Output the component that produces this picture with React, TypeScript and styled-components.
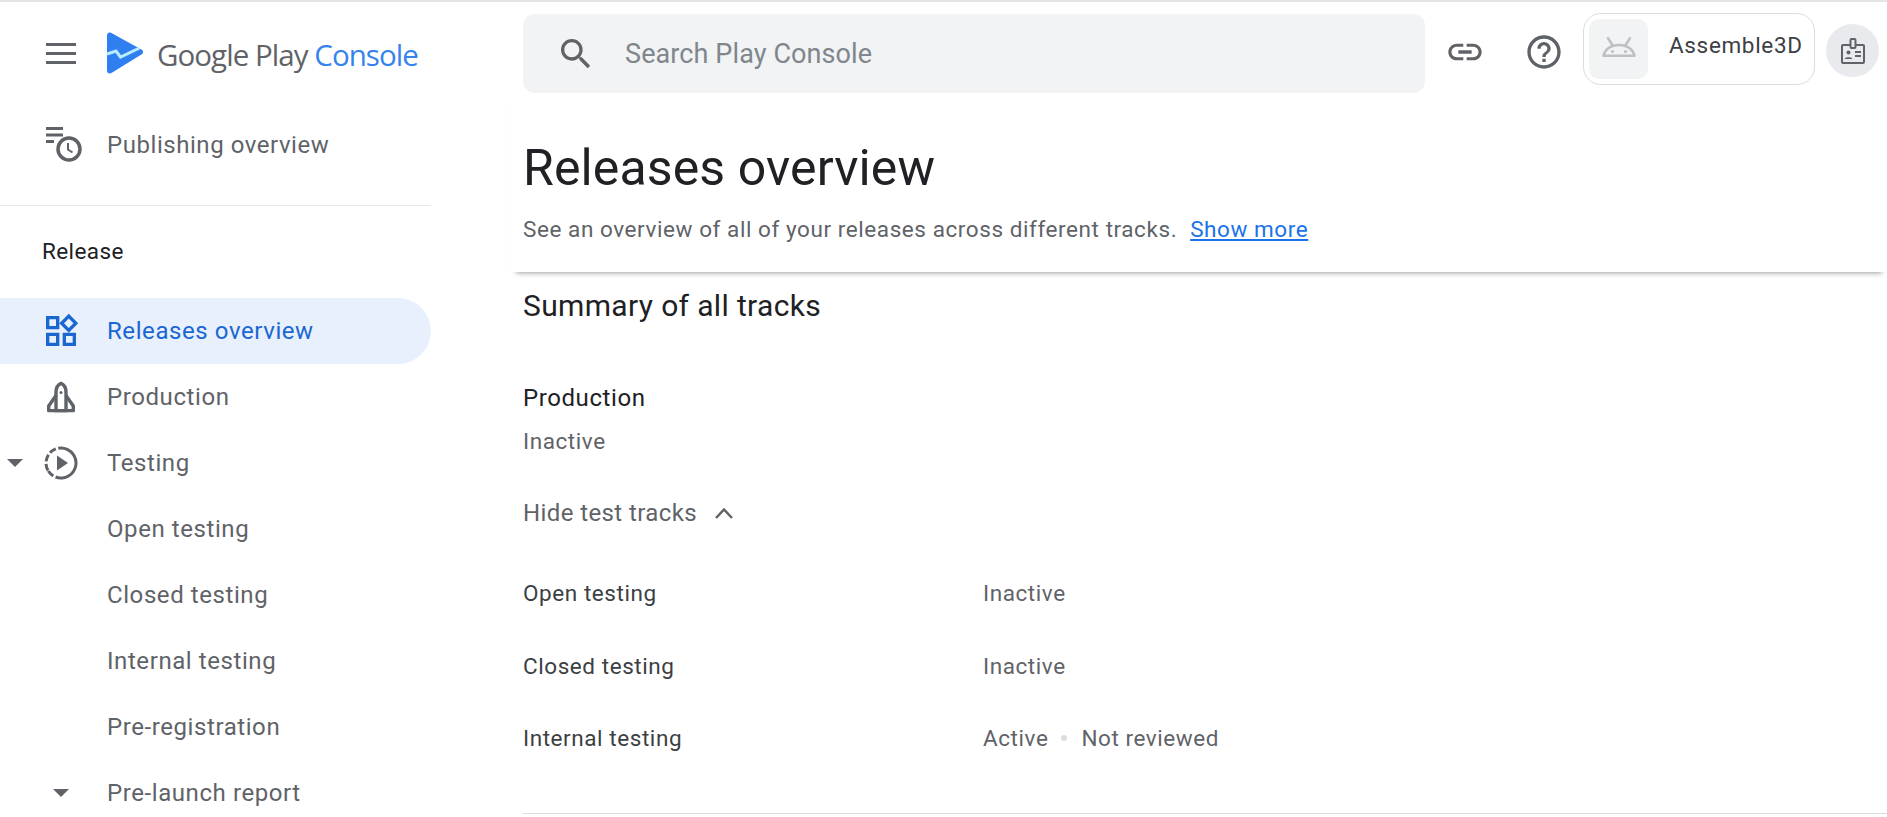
import React from "react";
import styled, { createGlobalStyle } from "styled-components";

const Global = createGlobalStyle`
  html, body { margin: 0; padding: 0; background: #fff; height: 100%; overflow: hidden; }
  body { font-family: Roboto, "Liberation Sans", sans-serif; color: #5f6368; }
  #root { height: 100%; }
`;

const Page = styled.div`
  display: grid;
  grid-template-columns: 431px 1fr;
  width: 1887px;
  height: 817px;
  overflow: hidden;
  border-top: 2px solid #e4e5e7;
  box-sizing: border-box;
`;

const Sidebar = styled.aside`
  display: flex;
  flex-direction: column;
  overflow: hidden;
`;

const Brand = styled.div`
  display: flex;
  align-items: center;
  height: 102px;
  padding-left: 46px;
  flex: none;
`;

const LogoMark = styled.svg`
  margin-left: 30px;
  flex: none;
`;

const LogoText = styled.span`
  margin: 4px 0 0 13px;
  font-family: "Open Sans", Roboto, sans-serif;
  font-size: 29.5px;
  letter-spacing: -0.95px;
  color: #5f6368;
  white-space: nowrap;
  line-height: 32px;
`;

const LogoAccent = styled.span`
  color: #3483ee;
`;

const PublishRow = styled.div`
  display: flex;
  align-items: center;
  height: 66px;
  padding-left: 46px;
  flex: none;
  margin-top: 8px;
`;

const NavDivider = styled.div`
  height: 1px;
  background: #e6e7e9;
  margin-top: 27px;
  flex: none;
`;

const SectionLabel = styled.div`
  font-size: 22.5px;
  line-height: 28px;
  letter-spacing: 0.4px;
  color: #202124;
  padding-left: 42px;
  margin: 31px 0 33px;
  flex: none;
`;

const NavItem = styled.div<{ $active?: boolean }>`
  position: relative;
  display: flex;
  align-items: center;
  height: 66px;
  flex: none;
  padding-left: 107px;
  padding-bottom: 1px;
  box-sizing: border-box;
  font-size: 24px;
  letter-spacing: 0.58px;
  white-space: nowrap;
  color: ${(p) => (p.$active ? "#1a67d2" : "#5f6368")};
  background: ${(p) => (p.$active ? "#e8f0fd" : "transparent")};
  border-radius: 0 33px 33px 0;
`;

const NavIconSlot = styled.span<{ $x: number }>`
  position: absolute;
  left: ${(p) => p.$x}px;
  top: 50%;
  transform: translateY(-50%);
  display: flex;
`;

const PublishLabel = styled.span`
  margin-left: 25px;
  font-size: 24px;
  letter-spacing: 0.55px;
  white-space: nowrap;
`;

const Main = styled.main`
  display: flex;
  flex-direction: column;
  min-width: 0;
  overflow: hidden;
`;

const TopBar = styled.div`
  display: flex;
  align-items: flex-start;
  padding: 12px 0 0 92px;
  flex: none;
`;

const SearchBox = styled.div`
  display: flex;
  align-items: center;
  width: 902px;
  height: 79px;
  background: #f1f3f4;
  border-radius: 12px;
  padding-left: 33px;
  box-sizing: border-box;
  flex: none;
  font-size: 27px;
  letter-spacing: 0.1px;
  color: #80868b;
`;

const SearchText = styled.span`
  margin-left: 29px;
`;

const IconButton = styled.div<{ $left: number }>`
  display: flex;
  margin: 18px 0 0 ${(p) => p.$left}px;
  flex: none;
`;

const AppChip = styled.div`
  display: flex;
  align-items: center;
  width: 232px;
  height: 72px;
  margin: -1px 0 0 19px;
  padding: 5px;
  box-sizing: border-box;
  border: 1px solid #dadce0;
  border-radius: 18px;
  flex: none;
`;

const AppThumb = styled.div`
  display: flex;
  align-items: center;
  justify-content: center;
  width: 59px;
  height: 60px;
  padding-bottom: 4px;
  box-sizing: border-box;
  background: #f1f3f4;
  border-radius: 10px;
  flex: none;
`;

const AppName = styled.span`
  margin: -8px 0 0 21px;
  font-size: 22.5px;
  letter-spacing: 0.66px;
  color: #3c4043;
  white-space: nowrap;
`;

const Avatar = styled.div`
  display: flex;
  align-items: center;
  justify-content: center;
  width: 53px;
  height: 53px;
  border-radius: 50%;
  background: #e8eaed;
  margin: 10px 0 0 11px;
  flex: none;
`;

const PageHead = styled.header`
  margin-left: 80px;
  padding: 47px 0 0 12px;
  height: 179px;
  box-sizing: border-box;
  box-shadow: 0 6px 5px -5px rgba(60, 64, 67, 0.5);
  flex: none;
`;

const Title = styled.h1`
  margin: 0;
  font-size: 50px;
  line-height: 56px;
  font-weight: 400;
  letter-spacing: 0.12px;
  color: #202124;
`;

const Subtitle = styled.p`
  margin: 19px 0 0;
  font-size: 22.5px;
  line-height: 28px;
  letter-spacing: 0.57px;
  color: #5f6368;
`;

const MoreLink = styled.a`
  margin-left: 13px;
  color: #1a73e8;
  text-decoration: underline;
`;

const Content = styled.section`
  padding: 0 0 0 92px;
  flex: 1;
  display: flex;
  flex-direction: column;
`;

const SectionTitle = styled.h2`
  margin: 17px 0 0;
  font-size: 30px;
  line-height: 34px;
  font-weight: 400;
  letter-spacing: 0.35px;
  color: #202124;
`;

const TrackName = styled.div`
  margin-top: 61px;
  font-size: 24px;
  line-height: 28px;
  letter-spacing: 0.58px;
  color: #202124;
`;

const TrackStatus = styled.div`
  margin-top: 15px;
  font-size: 22.5px;
  line-height: 28px;
  letter-spacing: 0.57px;
  color: #5f6368;
`;

const Toggle = styled.div`
  display: flex;
  align-items: center;
  margin-top: 44px;
  font-size: 24px;
  line-height: 28px;
  letter-spacing: 0.4px;
  color: #5f6368;
`;

const ToggleIcon = styled.svg`
  margin-left: 17px;
`;

const Rows = styled.div`
  display: flex;
  flex-direction: column;
  margin-top: 52px;
`;

const Row = styled.div`
  display: grid;
  grid-template-columns: 460px 1fr;
  height: 72.5px;
  font-size: 22.5px;
  line-height: 28px;
  letter-spacing: 0.57px;
  color: #3c4043;
`;

const RowValue = styled.div`
  display: flex;
  align-items: flex-start;
  color: #5f6368;
`;

const Dot = styled.span`
  width: 6px;
  height: 6px;
  border-radius: 50%;
  background: #dadce0;
  margin: 11px 14px 0 13px;
`;

const BottomRule = styled.div`
  height: 1px;
  background: #dadce0;
  margin-top: 16px;
`;

const Menu = () => (
  <svg width="30" height="21" viewBox="0 0 30 21" fill="#5f6368">
    <rect y="0" width="30" height="3" />
    <rect y="9" width="30" height="3" />
    <rect y="18" width="30" height="3" />
  </svg>
);

const Logo = () => (
  <LogoMark width="38" height="42" viewBox="0 0 38 42">
    <path
      d="M1 3.500C1 .9 3.200-.3 5.400.9l30 16.600c2.200 1.200 2.200 3.800 0 5L5.400 41.100C3.200 42.300 1 41.100 1 38.500z"
      fill="#2f7ff0"
    />
    <path d="M1 22l9-3 4.500 6 19-9" fill="none" stroke="#b9ecff" strokeWidth="3" />
  </LogoMark>
);

const PublishIcon = () => (
  <svg width="36" height="36" viewBox="0 0 36 36" fill="none">
    <path d="M0 1.500h17M0 8h17M0 14.500h8" stroke="#5f6368" strokeWidth="3" />
    <circle cx="23" cy="22" r="11" stroke="#5f6368" strokeWidth="3.500" />
    <path d="M22 16v6.500l4.500 3" stroke="#5f6368" strokeWidth="2" />
  </svg>
);

const Widgets = () => (
  <svg width="40" height="40" viewBox="0 0 24 24" fill="#1a67d2">
    <path d="M16.66 4.52l2.83 2.83-2.83 2.83-2.83-2.83 2.83-2.83M9 5v4H5V5h4m10 10v4h-4v-4h4M9 15v4H5v-4h4m7.66-13.31L11 7.34 16.66 13l5.66-5.66-5.66-5.65zM11 3H3v8h8V3zm10 10h-8v8h8v-8zm-10 0H3v8h8v-8z" />
  </svg>
);

const Rocket = () => (
  <svg width="28" height="31" viewBox="0 0 28 31" fill="none" stroke="#5f6368" strokeWidth="3.400">
    <path d="M14 1.900c-3.500 1.500-5 5-5 9v18.400h10V10.900c0-4-1.500-7.500-5-9z" />
    <path d="M9 14L1.700 24.500v4.800h24.600v-4.800L19 14" strokeLinejoin="round" />
    <circle cx="14" cy="11" r="1.500" fill="#5f6368" stroke="none" />
  </svg>
);

const TestingIcon = () => (
  <svg width="34" height="34" viewBox="0 0 34 34" fill="none">
    <circle cx="17" cy="17" r="15" stroke="#5f6368" strokeWidth="3" strokeDasharray="7 2.500 7 2.500 7 2.500 48 0" transform="rotate(150 17 17)" />
    <path d="M13 9.500l11 7.500-11 7.500z" fill="#5f6368" />
  </svg>
);

const Caret = () => (
  <svg width="16" height="8" viewBox="0 0 16 8" fill="#5f6368">
    <path d="M0 0h16L8 8z" />
  </svg>
);

const SearchIcon = () => (
  <svg width="40" height="40" viewBox="0 0 24 24" fill="#5f6368">
    <path d="M15.5 14h-.79l-.28-.27C15.41 12.59 16 11.11 16 9.5 16 5.91 13.09 3 9.5 3S3 5.91 3 9.5 5.91 16 9.5 16c1.61 0 3.09-.59 4.23-1.57l.27.28v.79l5 4.99L20.49 19l-4.99-5zm-6 0C7.01 14 5 11.99 5 9.5S7.01 5 9.500 5 14 7.010 14 9.500 11.990 14 9.500 14z" />
  </svg>
);

const LinkIcon = () => (
  <svg width="40" height="40" viewBox="0 0 24 24" fill="#5f6368">
    <path d="M3.9 12c0-1.71 1.39-3.1 3.1-3.1h4V7H7c-2.76 0-5 2.24-5 5s2.24 5 5 5h4v-1.9H7c-1.71 0-3.1-1.39-3.1-3.1zM8 13h8v-2H8v2zm9-6h-4v1.9h4c1.71 0 3.1 1.39 3.1 3.1s-1.39 3.1-3.1 3.1h-4V17h4c2.76 0 5-2.24 5-5s-2.24-5-5-5z" />
  </svg>
);

const HelpIcon = () => (
  <svg width="40" height="40" viewBox="0 0 24 24" fill="#5f6368">
    <path d="M11 18h2v-2h-2v2zm1-16C6.48 2 2 6.48 2 12s4.48 10 10 10 10-4.48 10-10S17.52 2 12 2zm0 18c-4.41 0-8-3.59-8-8s3.59-8 8-8 8 3.59 8 8-3.59 8-8 8zm0-14c-2.21 0-4 1.79-4 4h2c0-1.1.9-2 2-2s2 .9 2 2c0 2-3 1.75-3 5h2c0-2.25 3-2.5 3-5 0-2.21-1.79-4-4-4z" />
  </svg>
);

const AndroidHead = () => (
  <svg width="34" height="20" viewBox="0 1 34 20" fill="none">
    <path d="M1.500 19.800C2.500 14 8 9 17 9s14.500 5 15.500 10.800z" stroke="#bdc1c6" strokeWidth="2.500" strokeLinejoin="round" />
    <path d="M11 10L6 2.200M23 10l5-7.800" stroke="#bdc1c6" strokeWidth="2.500" strokeLinecap="round" />
    <circle cx="10.500" cy="15.500" r="1.600" fill="#bdc1c6" />
    <circle cx="23.500" cy="15.500" r="1.600" fill="#bdc1c6" />
  </svg>
);

const BadgeIcon = () => (
  <svg width="24" height="26" viewBox="0 0 24 26" fill="none" stroke="#5f6368">
    <rect x="1" y="7" width="22" height="18" rx="1" strokeWidth="2" />
    <rect x="9.500" y="1" width="5" height="9" rx="1" strokeWidth="2" fill="#e8eaed" />
    <circle cx="7.500" cy="14.500" r="2" fill="#5f6368" stroke="none" />
    <path d="M3.500 21c.5-2.500 7.500-2.500 8 0z" fill="#5f6368" stroke="none" />
    <path d="M14 14h6M14 18h6" strokeWidth="1.800" />
  </svg>
);

const ChevronUp = () => (
  <ToggleIcon width="20" height="12" viewBox="0 0 20 12" fill="none" stroke="#5f6368" strokeWidth="2.500">
    <path d="M2 11l8-8.500 8 8.500" />
  </ToggleIcon>
);

const subItems = ["Open testing", "Closed testing", "Internal testing", "Pre-registration"];

export default function App() {
  return (
    <>
      <Global />
      <Page>
        <Sidebar>
          <Brand>
            <Menu />
            <Logo />
            <LogoText>
              Google Play <LogoAccent>Console</LogoAccent>
            </LogoText>
          </Brand>
          <PublishRow>
            <PublishIcon />
            <PublishLabel>Publishing overview</PublishLabel>
          </PublishRow>
          <NavDivider />
          <SectionLabel>Release</SectionLabel>
          <NavItem $active>
            <NavIconSlot $x={41}>
              <Widgets />
            </NavIconSlot>
            Releases overview
          </NavItem>
          <NavItem>
            <NavIconSlot $x={47}>
              <Rocket />
            </NavIconSlot>
            Production
          </NavItem>
          <NavItem>
            <NavIconSlot $x={7}>
              <Caret />
            </NavIconSlot>
            <NavIconSlot $x={44}>
              <TestingIcon />
            </NavIconSlot>
            Testing
          </NavItem>
          {subItems.map((label) => (
            <NavItem key={label}>{label}</NavItem>
          ))}
          <NavItem>
            <NavIconSlot $x={53}>
              <Caret />
            </NavIconSlot>
            Pre-launch report
          </NavItem>
        </Sidebar>
        <Main>
          <TopBar>
            <SearchBox>
              <SearchIcon />
              <SearchText>Search Play Console</SearchText>
            </SearchBox>
            <IconButton $left={20}>
              <LinkIcon />
            </IconButton>
            <IconButton $left={39}>
              <HelpIcon />
            </IconButton>
            <AppChip>
              <AppThumb>
                <AndroidHead />
              </AppThumb>
              <AppName>Assemble3D</AppName>
            </AppChip>
            <Avatar>
              <BadgeIcon />
            </Avatar>
          </TopBar>
          <PageHead>
            <Title>Releases overview</Title>
            <Subtitle>
              See an overview of all of your releases across different tracks.
              <MoreLink>Show more</MoreLink>
            </Subtitle>
          </PageHead>
          <Content>
            <SectionTitle>Summary of all tracks</SectionTitle>
            <TrackName>Production</TrackName>
            <TrackStatus>Inactive</TrackStatus>
            <Toggle>
              Hide test tracks
              <ChevronUp />
            </Toggle>
            <Rows>
              <Row>
                <span>Open testing</span>
                <RowValue>Inactive</RowValue>
              </Row>
              <Row>
                <span>Closed testing</span>
                <RowValue>Inactive</RowValue>
              </Row>
              <Row>
                <span>Internal testing</span>
                <RowValue>
                  Active<Dot />Not reviewed
                </RowValue>
              </Row>
            </Rows>
            <BottomRule />
          </Content>
        </Main>
      </Page>
    </>
  );
}
